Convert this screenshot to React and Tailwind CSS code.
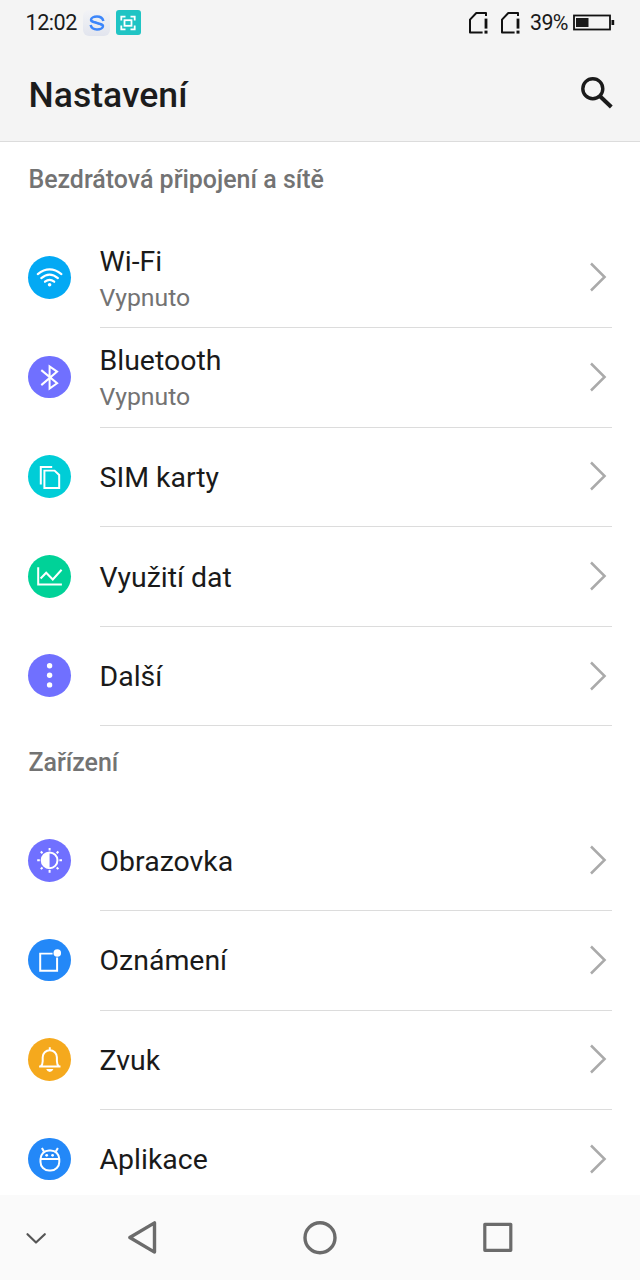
import React from "react";

function RoundIcon({ className, children }) {
  return (
    <span className={"flex h-[42.67px] w-[42.67px] shrink-0 rounded-full " + className}>
      <svg
        viewBox="-21.6 -21.33 42.67 42.67"
        className="h-full w-full"
        fill="none"
        stroke="#fff"
        strokeWidth="2"
      >
        {children}
      </svg>
    </span>
  );
}

const icons = {
  wifi: (
    <RoundIcon className="bg-[#03a9f4]">
      <g strokeWidth="2.2" strokeLinecap="round">
        <path d="M-11.8-3.2Q0-12.6 11.8-3.2" />
        <path d="M-8.3.8Q0-6.4 8.3.8" />
        <path d="M-4.6 4.4Q0 .8 4.6 4.4" />
      </g>
      <circle cx="0" cy="7.4" r="1.8" fill="#fff" stroke="none" />
    </RoundIcon>
  ),
  bluetooth: (
    <RoundIcon className="bg-[#7070ff]">
      <path d="M-8.3-7.2 7.5 5.9 0 11.3V-11L7.5-5.7-8.3 7.8" />
    </RoundIcon>
  ),
  sim: (
    <RoundIcon className="bg-[#00cdd7]">
      <path d="M-5.2-5.7H5L9.6-1.3V11.7H-5.2Z" />
      <path d="M-8.8 8.2V-9.4H2.6" />
    </RoundIcon>
  ),
  data: (
    <RoundIcon className="bg-[#00d298]">
      <path d="M-11.4-9.2V8.2H12.3" />
      <path d="M-9 2.2-3.4-3.6 3.2 3.1 12-6.6" />
    </RoundIcon>
  ),
  more: (
    <RoundIcon className="bg-[#7070ff]">
      <g fill="#fff" stroke="none">
        <circle cy="-9.6" r="2.7" />
        <circle cy="0" r="2.7" />
        <circle cy="9.6" r="2.7" />
      </g>
    </RoundIcon>
  ),
  display: (
    <RoundIcon className="bg-[#7070ff]">
      <circle r="7.9" />
      <path d="M0-7.9A7.9 7.9 0 0 0 0 7.9Z" fill="#fff" stroke="none" />
      <path d="M0-12.4v2.6M0 12.4V9.8M-12.4 0h2.6M12.4 0H9.8M-8.8-8.8l1.7 1.7M8.8-8.8 7.1-7.1M-8.8 8.8l1.7-1.7M8.8 8.8 7.1 7.1" />
    </RoundIcon>
  ),
  notifications: (
    <RoundIcon className="bg-[#2388f8]">
      <path d="M3-6.7H-9.4V10.4H7.5V-2.8" />
      <circle cx="7.7" cy="-7.3" r="3.8" fill="#fff" stroke="none" />
    </RoundIcon>
  ),
  sound: (
    <RoundIcon className="bg-[#f5a91d]">
      <path d="M.2-12V-9M-10.5 7.3H10.9M-9 7.2Q-6.9 5.4-6.9 2V-2A7.1 7.1 0 0 1 7.3-2V2Q7.3 5.4 9.4 7.2" />
      <path d="M-3.4 9.6H3.8Q2.6 12.7.2 12.7T-3.4 9.6Z" fill="#fff" stroke="none" />
    </RoundIcon>
  ),
  apps: (
    <RoundIcon className="bg-[#2388f8]">
      <rect x="-9.1" y="-8.8" width="18.8" height="20" rx="8.6" />
      <path d="M-9.1-.2H9.7M-7.7-11.3-5.6-7.7M8.3-11.3 6.2-7.7" />
      <circle cx="-2.9" cy="-4" r="1.4" fill="#fff" stroke="none" />
      <circle cx="3" cy="-4" r="1.4" fill="#fff" stroke="none" />
    </RoundIcon>
  ),
};

const sections = [
  {
    title: "Bezdrátová připojení a sítě",
    headingClass: "h-[86.6px] pt-5",
    items: [
      { icon: "wifi", label: "Wi-Fi", summary: "Vypnuto" },
      { icon: "bluetooth", label: "Bluetooth", summary: "Vypnuto" },
      { icon: "sim", label: "SIM karty" },
      { icon: "data", label: "Využití dat" },
      { icon: "more", label: "Další" },
    ],
  },
  {
    title: "Zařízení",
    headingClass: "h-[85.2px] pt-[18.6px]",
    items: [
      { icon: "display", label: "Obrazovka" },
      { icon: "notifications", label: "Oznámení" },
      { icon: "sound", label: "Zvuk" },
      { icon: "apps", label: "Aplikace" },
    ],
  },
];

function Row({ icon, label, summary }) {
  return (
    <li className="flex h-[99.56px] pr-7 pl-[28.4px]">
      <div className="flex items-center pb-[1.6px]">{icons[icon]}</div>
      <div className="ml-[28.5px] flex flex-1 items-center justify-between border-b border-[#dcdcdc]">
        <div className={summary ? "flex flex-col pt-1" : "flex flex-col pt-[2px]"}>
          <span className="text-[28.44px] leading-9 text-[#1a1a1a]">{label}</span>
          {summary && (
            <span className="text-[24.8px] leading-9 text-[#737373]">{summary}</span>
          )}
        </div>
        <svg viewBox="0 0 18 30" className="mr-[5px] mb-px h-[30px] w-[18px]" fill="none" stroke="#aaa" strokeWidth="2.5">
          <path d="M2 1.5 15.6 15 2 28.5" />
        </svg>
      </div>
    </li>
  );
}

function SimAlert() {
  return (
    <svg viewBox="0 0 20 24" className="h-6 w-5" fill="none" stroke="#111" strokeWidth="2">
      <path d="M18 5V2H8.3L2 8.6V21.6H14.6" strokeLinejoin="round" />
      <path d="M18 7.6V17.6" strokeWidth="2.8" />
      <path d="M18 19.6V22.6" strokeWidth="3" />
    </svg>
  );
}

function StatusBar() {
  return (
    <div className="flex h-[46px] items-center justify-between pr-[25px] pl-[25.5px] text-[#1a1a1a]">
      <div className="flex items-center">
        <span className="w-[51px] text-[21.6px] tracking-[-0.5px] whitespace-nowrap">12:02</span>
        <span className="ml-[6px] flex h-[26px] w-[27px] items-center justify-center rounded-md bg-linear-to-b from-[#f2f3f6] to-[#e2e5ee]">
          <svg viewBox="0 0 16 16" className="ml-[2px] h-4 w-4" fill="none" stroke="#3c86fb" strokeWidth="2.5">
            <path d="M14.4 6C13.6 3 11 1.5 8 1.5 4.6 1.5 2 3 2 5 2 6.6 4 7 8 8S14 9.400 14 11C14 13 11.400 14.500 8 14.500 5 14.500 2.400 13 1.600 10" />
            <path d="M2 5.500 14 10.500" strokeWidth="1.6" />
          </svg>
        </span>
        <span className="ml-[6px] flex h-[25px] w-[25px] items-center justify-center rounded-[3px] bg-[#20c4c4]">
          <svg viewBox="0 0 16 16" className="h-4 w-4" fill="none" stroke="#fff" strokeWidth="1.8">
            <path d="M1.3 5.500V1.700H5.500M10.500 1.700h4.200v3.800M14.700 10.500v3.800H10.500M5.500 14.300H1.300v-3.800" />
            <rect x="4.500" y="5.200" width="7" height="5.600" />
          </svg>
        </span>
      </div>
      <div className="flex items-center">
        <SimAlert />
        <span className="ml-3 flex"><SimAlert /></span>
        <span className="ml-[10px] w-[38px] text-[21.4px] tracking-[-0.6px] whitespace-nowrap">39%</span>
        <svg viewBox="0 0 42 18" className="ml-[5px] h-[18px] w-[42px]" fill="none">
          <rect x="1" y="1.5" width="36" height="14" stroke="#111" strokeWidth="1.8" />
          <rect x="3" y="4" width="12.5" height="9" fill="#1a1a1a" />
          <rect x="38.5" y="6" width="2.7" height="5" fill="#111" />
        </svg>
      </div>
    </div>
  );
}

export default function App() {
  return (
    <div className="flex h-[1280px] w-[640px] flex-col overflow-hidden bg-white font-['Roboto',sans-serif]">
      <header className="h-[142px] shrink-0 border-b border-[#dcdcdc] bg-[#f4f4f4]">
        <StatusBar />
        <div className="flex h-[95px] items-center justify-between pr-[26px] pl-[28.5px]">
          <h1 className="pt-[5px] text-[35.56px] font-medium text-[#1c1c1c]">Nastavení</h1>
          <svg viewBox="0 0 34 34" className="mb-[2px] h-[34px] w-[34px]" fill="none" stroke="#1a1a1a">
            <circle cx="12.8" cy="12.7" r="10" strokeWidth="3.4" />
            <path d="M20 20.2 31.3 31" strokeWidth="4" />
          </svg>
        </div>
      </header>
      <main className="min-h-0 flex-1 overflow-hidden">
        {sections.map((s) => (
          <section key={s.title}>
            <h2 className={"pl-[28.4px] text-[24.96px] leading-9 font-medium text-[#737373] " + s.headingClass}>
              {s.title}
            </h2>
            <ul>
              {s.items.map((i) => (
                <Row key={i.label} {...i} />
              ))}
            </ul>
          </section>
        ))}
      </main>
      <nav className="flex h-[85px] shrink-0 items-center bg-[#fafafa] pl-[25px]">
        <svg viewBox="0 0 22 14" className="h-[14px] w-[22px]" fill="none" stroke="#555" strokeWidth="2.2" strokeLinecap="round" strokeLinejoin="round">
          <path d="M2.500 3.200 11 11.500 19.800 3.200" />
        </svg>
        <svg viewBox="0 0 32 36" className="ml-20 h-9 w-8" fill="none" stroke="#6b6b6b" strokeWidth="3.4" strokeLinejoin="round">
          <path d="M27.500 2.900V32.100L2.800 17.500Z" />
        </svg>
        <svg viewBox="0 0 36 36" className="ml-[143px] h-9 w-9" fill="none" stroke="#6b6b6b" strokeWidth="3.4">
          <circle cx="18" cy="17.700" r="15" />
        </svg>
        <svg viewBox="0 0 32 32" className="ml-[144px] h-8 w-8" fill="none" stroke="#6b6b6b" strokeWidth="3.2" strokeLinejoin="round">
          <rect x="2.800" y="2.300" width="26" height="26" />
        </svg>
      </nav>
    </div>
  );
}
